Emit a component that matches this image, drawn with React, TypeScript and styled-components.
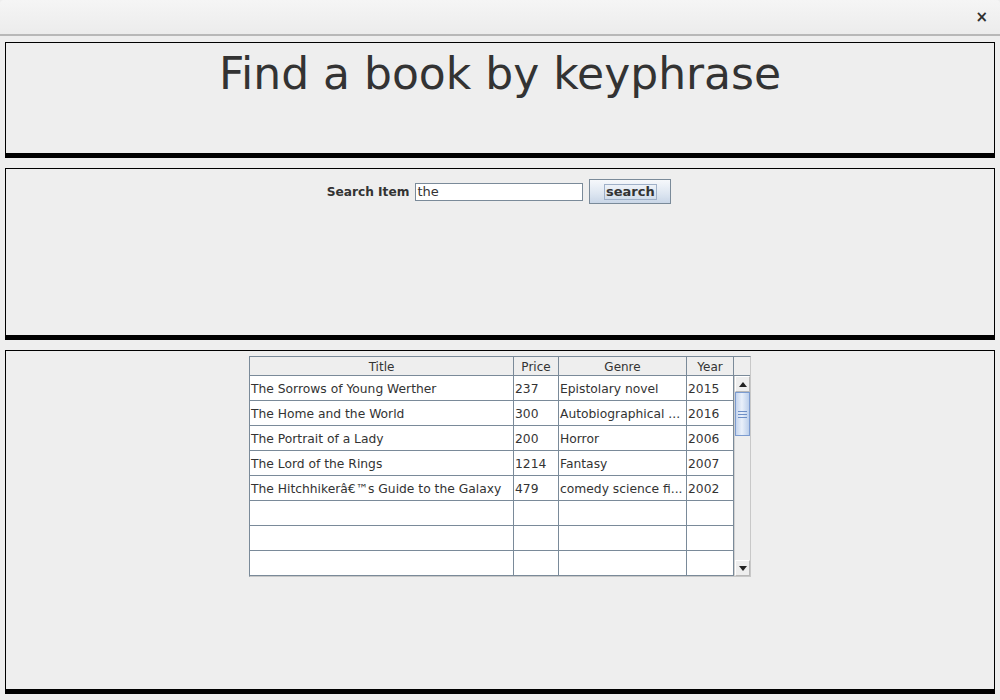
import React from "react";
import styled, { createGlobalStyle } from "styled-components";

const Global = createGlobalStyle`
  html, body { margin: 0; padding: 0; background: #eeeeee; }
  body { font-family: "DejaVu Sans", "Liberation Sans", sans-serif; width: 1000px; height: 700px; overflow: hidden; }
`;

const Frame = styled.div`
  width: 1000px;
  height: 700px;
  display: flex;
  flex-direction: column;
  background: #eeeeee;
`;

const TitleBar = styled.div`
  height: 36px;
  flex: none;
  box-sizing: border-box;
  background: linear-gradient(#f5f5f5, #ececec);
  border-bottom: 2px solid #b8b8b8;
  border-radius: 4px 4px 0 0;
  display: flex;
  align-items: center;
  justify-content: flex-end;
  padding-right: 12px;
`;

const Close = styled.span`
  font-family: "DejaVu Sans", sans-serif;
  font-weight: bold;
  font-size: 15px;
  color: #2e2e2e;
  line-height: 1;
  margin-top: 1px;
`;

const Content = styled.div`
  flex: 1;
  display: flex;
  flex-direction: column;
  gap: 10px;
  padding: 6px 5px 0 5px;
`;

const Panel = styled.div<{ $h: number }>`
  height: ${(p) => p.$h}px;
  box-sizing: border-box;
  border: 1px solid #000;
  border-bottom: 5px solid #000;
  display: flex;
  justify-content: center;
  align-items: flex-start;
`;

const Heading = styled.h1`
  margin: 0;
  margin-top: 4px;
  font-family: "DejaVu Sans", sans-serif;
  font-weight: normal;
  font-size: 44px;
  line-height: 54px;
  color: #333333;
`;

const SearchRow = styled.div`
  margin-top: 10px;
  margin-right: 2px;
  display: flex;
  align-items: center;
  gap: 6px;
`;

const Label = styled.span`
  font-family: "DejaVu Sans", sans-serif;
  font-weight: bold;
  font-size: 12.2px;
  color: #333333;
`;

const Field = styled.div`
  width: 168px;
  height: 18px;
  box-sizing: border-box;
  border: 1px solid #7a8a99;
  background: #fff;
  font-family: "DejaVu Sans", sans-serif;
  font-size: 13px;
  color: #333333;
  line-height: 16px;
  padding-left: 1px;
`;

const Button = styled.div`
  width: 82px;
  height: 25px;
  box-sizing: border-box;
  border: 1px solid #7a8a99;
  background: linear-gradient(#f6f8fb, #dde6f1 60%, #c9d6e7);
  display: flex;
  align-items: center;
  justify-content: center;
`;

const ButtonLabel = styled.span`
  font-family: "DejaVu Sans", sans-serif;
  font-weight: bold;
  font-size: 13px;
  color: #333333;
  border: 1px solid #9fb0c8;
  padding: 0 1px;
  line-height: 14px;
`;

const TableWrap = styled.div`
  margin-top: 5px;
  width: 502px;
  height: 221px;
  box-sizing: border-box;
  border: 1px solid #7a8a99;
  border-right-color: #c8c8c8;
  border-bottom-color: #c8c8c8;
  display: flex;
  background: #eeeeee;
`;

const TableArea = styled.div`
  width: 485px;
  display: flex;
  flex-direction: column;
`;

const Grid = styled.div`
  display: grid;
  grid-template-columns: 264px 45px 128px 47px;
`;

const HeadCell = styled.div`
  height: 19px;
  box-sizing: border-box;
  background: #eeeeee;
  border-right: 1px solid #7a8a99;
  border-bottom: 1px solid #7a8a99;
  font-family: "DejaVu Sans", sans-serif;
  font-size: 12px;
  color: #333333;
  text-align: center;
  line-height: 20px;
  white-space: nowrap;
`;

const Cell = styled.div`
  height: 25px;
  box-sizing: border-box;
  background: #ffffff;
  border-right: 1px solid #7a8a99;
  border-bottom: 1px solid #7a8a99;
  font-family: "DejaVu Sans", sans-serif;
  font-size: 12.3px;
  color: #333333;
  line-height: 26px;
  padding-left: 1px;
  white-space: nowrap;
  overflow: hidden;
`;

const ScrollBar = styled.div`
  width: 16px;
  display: flex;
  flex-direction: column;
  background: #eeeeee;
`;

const Corner = styled.div`
  height: 19px;
  box-sizing: border-box;
  border-bottom: 1px solid #7a8a99;
  background: #eeeeee;
`;

const Track = styled.div`
  flex: 1;
  display: flex;
  flex-direction: column;
  border-left: 1px solid #d0d0d0;
`;

const Arrow = styled.div`
  height: 16px;
  flex: none;
  background: #eeeeee;
  border: 1px solid #ffffff;
  border-right-color: #b8b8b8;
  border-bottom-color: #b8b8b8;
  box-sizing: border-box;
  display: flex;
  align-items: center;
  justify-content: center;
`;

const Thumb = styled.div`
  height: 44px;
  flex: none;
  box-sizing: border-box;
  border: 1px solid #7c9cd0;
  background: linear-gradient(90deg, #c5d5ee, #e9f0fa 45%, #bccfeb);
  display: flex;
  flex-direction: column;
  align-items: center;
  justify-content: center;
  gap: 2px;
`;

const Grip = styled.div`
  width: 9px;
  height: 1px;
  background: #6e8fc6;
`;

const Spacer = styled.div`
  flex: 1;
`;

const rows: string[][] = [
  ["The Sorrows of Young Werther", "237", "Epistolary novel", "2015"],
  ["The Home and the World", "300", "Autobiographical ...", "2016"],
  ["The Portrait of a Lady", "200", "Horror", "2006"],
  ["The Lord of the Rings", "1214", "Fantasy", "2007"],
  ["The Hitchhikerâ€™s Guide to the Galaxy", "479", "comedy science fi...", "2002"],
  ["", "", "", ""],
  ["", "", "", ""],
  ["", "", "", ""],
];

const Tri = ({ up }: { up: boolean }) => (
  <svg width="8" height="5" viewBox="0 0 8 5">
    <path d={up ? "M0 5 L4 0 L8 5 Z" : "M0 0 L8 0 L4 5 Z"} fill="#222" />
  </svg>
);

export default function App() {
  return (
    <Frame>
      <Global />
      <TitleBar>
        <Close>×</Close>
      </TitleBar>
      <Content>
        <Panel $h={116}>
          <Heading>Find a book by keyphrase</Heading>
        </Panel>
        <Panel $h={172}>
          <SearchRow>
            <Label>Search Item</Label>
            <Field>the</Field>
            <Button>
              <ButtonLabel>search</ButtonLabel>
            </Button>
          </SearchRow>
        </Panel>
        <Panel $h={344}>
          <TableWrap>
            <TableArea>
              <Grid>
                <HeadCell>Title</HeadCell>
                <HeadCell>Price</HeadCell>
                <HeadCell>Genre</HeadCell>
                <HeadCell>Year</HeadCell>
                {rows.map((r, i) =>
                  r.map((c, j) => <Cell key={`${i}-${j}`}>{c}</Cell>)
                )}
              </Grid>
            </TableArea>
            <ScrollBar>
              <Corner />
              <Track>
                <Arrow>
                  <Tri up />
                </Arrow>
                <Thumb>
                  <Grip />
                  <Grip />
                  <Grip />
                </Thumb>
                <Spacer />
                <Arrow>
                  <Tri up={false} />
                </Arrow>
              </Track>
            </ScrollBar>
          </TableWrap>
        </Panel>
      </Content>
    </Frame>
  );
}
